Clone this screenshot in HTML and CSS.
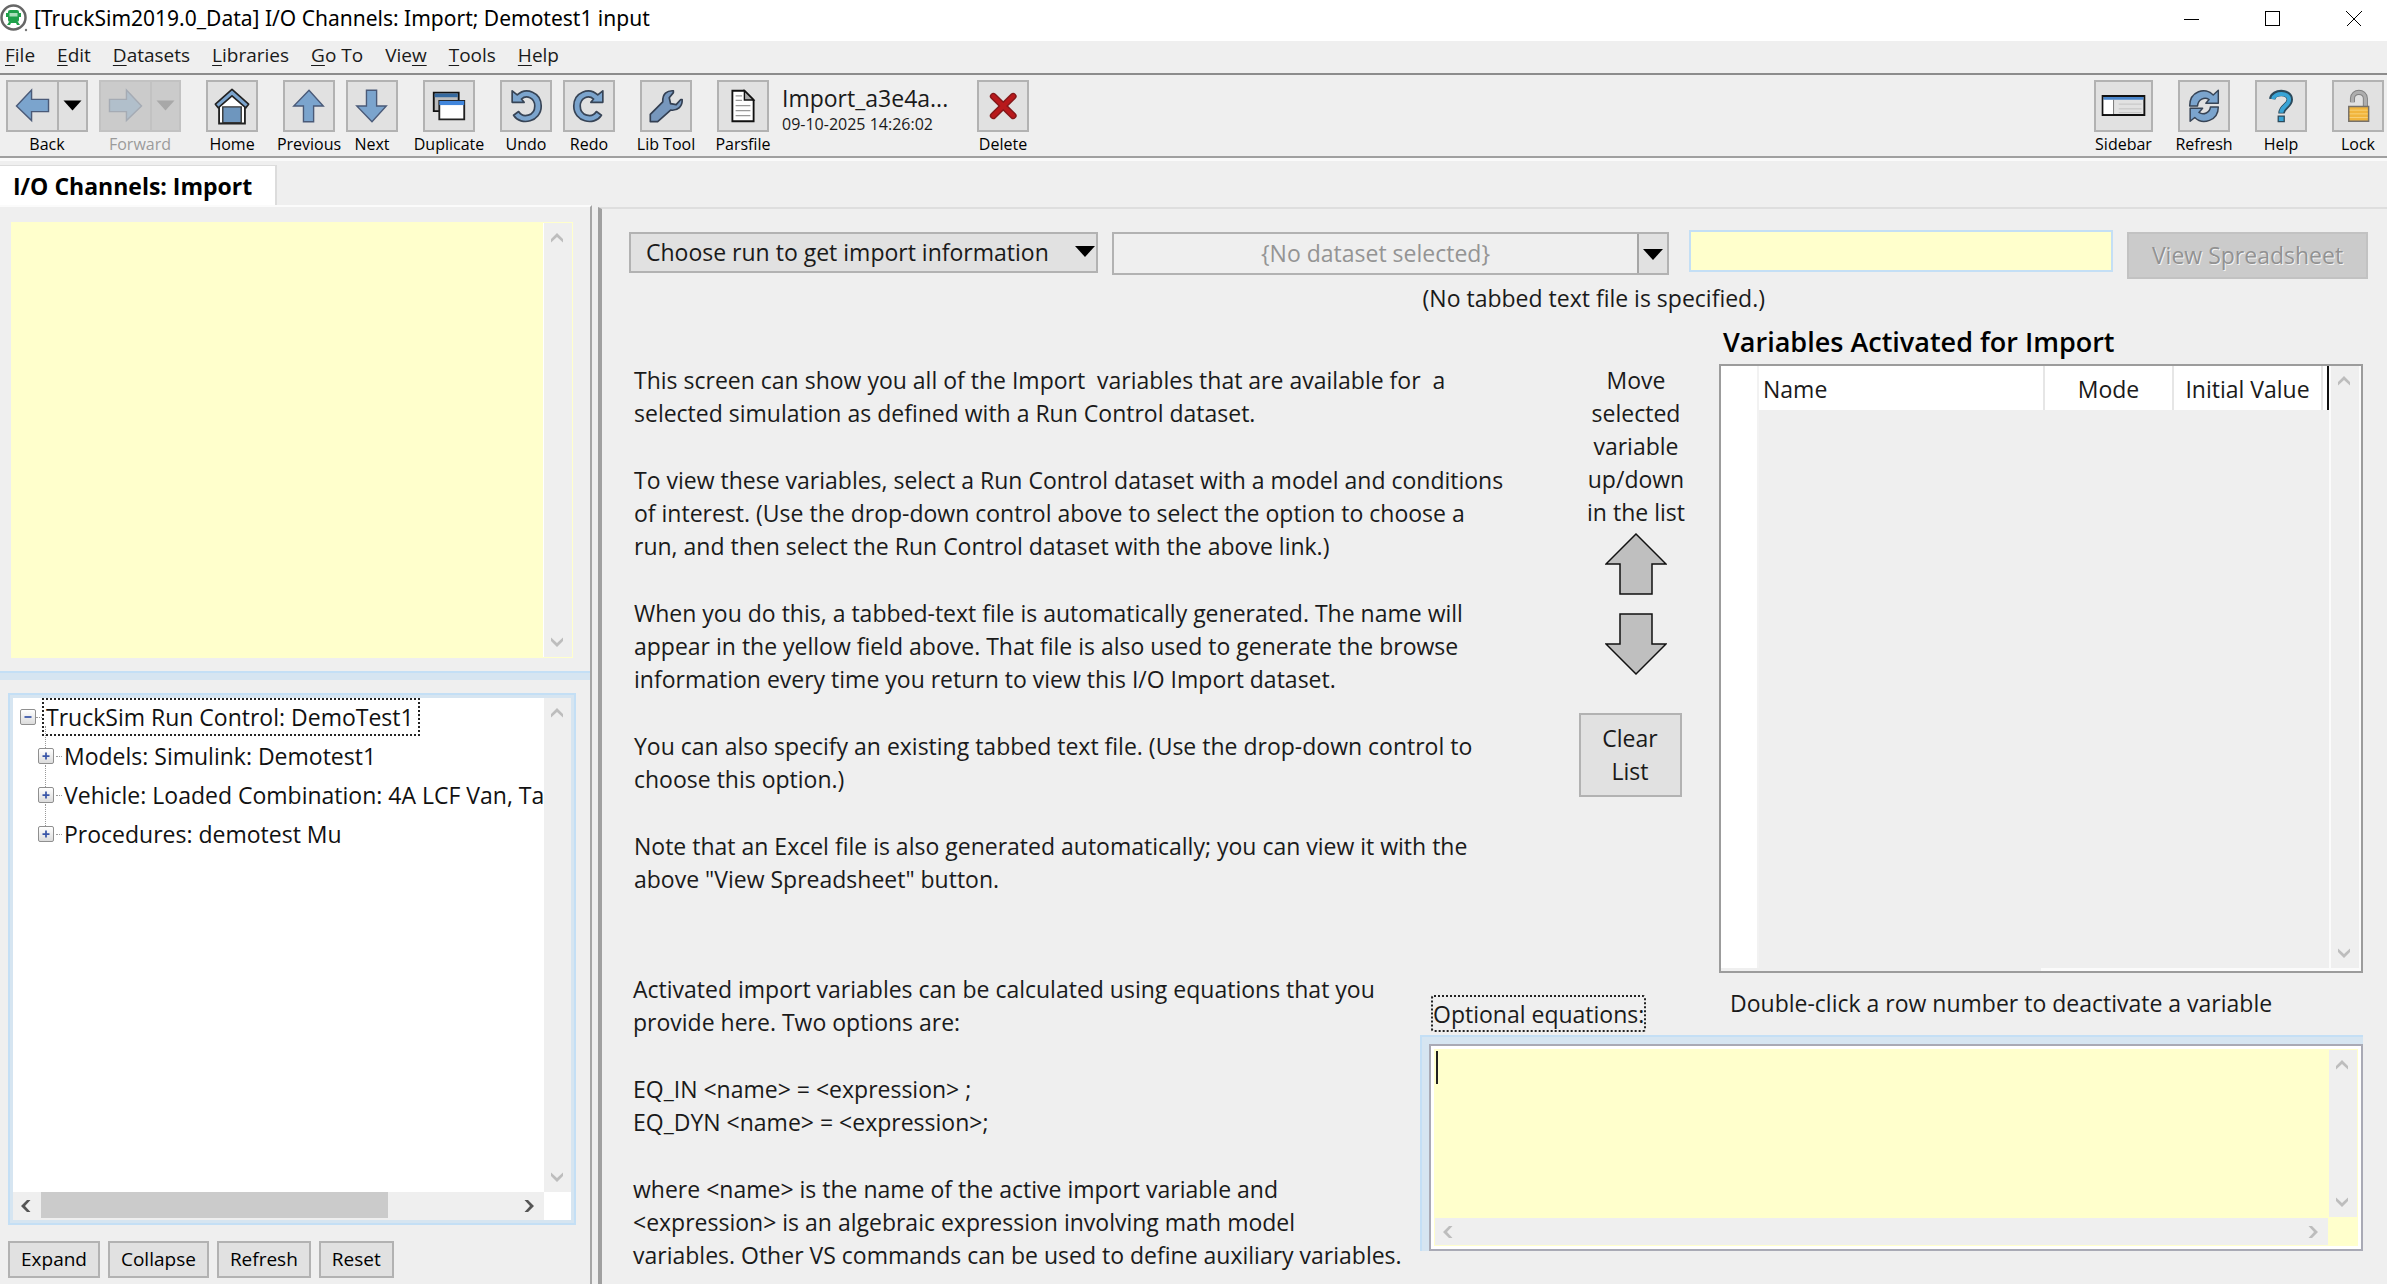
FILE: index.html
```
<!DOCTYPE html>
<html lang="en">
<head>
<meta charset="utf-8">
<title>[TruckSim2019.0_Data] I/O Channels: Import; Demotest1 input</title>
<link rel="stylesheet" href="styles.css">
</head>
<body>
<svg class="defs" aria-hidden="true">
  <symbol id="chev-up" viewBox="0 0 14 12"><path d="M1 8 7 2l6 6v3.500L7 6l-6 5.500z"/></symbol>
  <symbol id="chev-down" viewBox="0 0 14 12"><path d="M1 4l6 6 6-6V.5L7 6 1 .5z"/></symbol>
  <symbol id="chev-left" viewBox="0 0 12 14"><path d="M8 1 2 7l6 6h3.500L6 7l5.500-6z"/></symbol>
  <symbol id="chev-right" viewBox="0 0 12 14"><path d="M4 1l6 6-6 6H.5L6 7 .5 1z"/></symbol>
</svg>

<header class="titlebar">
  <svg class="app-icon" viewBox="0 0 28 28" aria-hidden="true">
    <circle cx="13.500" cy="13.500" r="12" fill="#fff" stroke="#666" stroke-width="2.500"/>
    <rect x="8" y="6" width="11" height="12" rx="2" fill="#1fa04a"/>
    <path d="M9.500 9h8v3.500h-8z" fill="#a9dfba"/>
    <path d="M6 9h2v4H6zM19 9h2v4h-2zM9 18l-2 3h3l1-2h5l1 2h3l-2-3z" fill="#1fa04a"/>
    <circle cx="26" cy="26" r="1.200" fill="#777"/>
  </svg>
  <h1 class="title">[TruckSim2019.0_Data] I/O Channels: Import; Demotest1 input</h1>
  <div class="window-buttons">
    <button type="button" aria-label="Minimize"><svg viewBox="0 0 16 16"><path d="M0 8.500h15"/></svg></button>
    <button type="button" aria-label="Maximize"><svg viewBox="0 0 16 16"><path d="M.5.5h14v14H.5z"/></svg></button>
    <button type="button" aria-label="Close"><svg viewBox="0 0 16 16"><path d="M.5.5l15 15M15.500.5l-15 15"/></svg></button>
  </div>
</header>

<nav class="menubar">
  <button type="button"><u>F</u>ile</button>
  <button type="button"><u>E</u>dit</button>
  <button type="button"><u>D</u>atasets</button>
  <button type="button"><u>L</u>ibraries</button>
  <button type="button"><u>G</u>o To</button>
  <button type="button">Vie<u>w</u></button>
  <button type="button"><u>T</u>ools</button>
  <button type="button"><u>H</u>elp</button>
</nav>

<div class="toolbar">
  <div class="group">
    <div class="tool">
      <div class="split">
        <button type="button" aria-labelledby="t-back"><svg viewBox="0 0 52 52"><path d="M9 26 25 9v10h18v13H25v9.500z" fill="#7ba4cd" stroke="#4a5a78" stroke-width="1.500"/></svg></button>
        <button type="button" class="drop" aria-label="Back history"><svg viewBox="0 0 30 52"><path d="M5 20h20L15 31z"/></svg></button>
      </div>
      <span id="t-back">Back</span>
    </div>
    <div class="tool is-disabled">
      <div class="split">
        <button type="button" disabled aria-labelledby="t-fwd"><svg viewBox="0 0 52 52"><path d="M43 26 27 9v10H9v13h18v9.500z" fill="#b1bfcb" stroke="#a5abb4" stroke-width="1.500"/></svg></button>
        <button type="button" disabled class="drop" aria-label="Forward history"><svg viewBox="0 0 30 52"><path d="M5 20h20L15 31z" fill="#a8a8a8"/></svg></button>
      </div>
      <span id="t-fwd">Forward</span>
    </div>
  </div>
  <div class="group">
    <div class="tool">
      <button type="button" aria-labelledby="t-home"><svg viewBox="0 0 52 52"><path d="M12 24v21h28V24L26 12z" fill="#fff" stroke="#222" stroke-width="2"/><path d="M16 27h20v17H16z" fill="#6e96be" stroke="#333" stroke-width="1.500"/><path d="M26 8 8 24l3 4 15-13 15 13 3-4z" fill="#7ba4cd" stroke="#222" stroke-width="1.800" stroke-linejoin="round"/></svg></button>
      <span id="t-home">Home</span>
    </div>
  </div>
  <div class="group">
    <div class="tool">
      <button type="button" aria-labelledby="t-prev"><svg viewBox="0 0 52 52"><path d="M26 9 41.500 26H31v17H20V26H9.500z" fill="#7ba4cd" stroke="#4a5a78" stroke-width="1.500"/></svg></button>
      <span id="t-prev">Previous</span>
    </div>
    <div class="tool">
      <button type="button" aria-labelledby="t-next"><svg viewBox="0 0 52 52"><path d="M26 43 9.500 26H20V9h11v17h10.500z" fill="#7ba4cd" stroke="#4a5a78" stroke-width="1.500"/></svg></button>
      <span id="t-next">Next</span>
    </div>
  </div>
  <div class="group">
    <div class="tool">
      <button type="button" aria-labelledby="t-dup"><svg viewBox="0 0 52 52"><path d="M9.500 11.500h27v20h-27z" fill="#bcbcbc" stroke="#111" stroke-width="2"/><path d="M10.500 12.500h25v4h-25z" fill="#35699f"/><path d="M15.500 20.500h27v20h-27z" fill="#fff" stroke="#222" stroke-width="2"/><path d="M15.500 20.500h27v4.500h-27z" fill="#4186dc"/></svg></button>
      <span id="t-dup">Duplicate</span>
    </div>
  </div>
  <div class="group">
    <div class="tool">
      <button type="button" aria-labelledby="t-undo"><svg viewBox="0 0 52 52"><path d="M11 9.500 16.500 14C26 5 42.500 11 42.500 26c0 17-22 22.500-30 10l5.500-4c4.500 7.500 17.500 5 17.500-6 0-9-9-12.500-14.500-7.500l3 3.500H11z" fill="#7ba4cd" stroke="#374456" stroke-width="1.800" stroke-linejoin="round"/></svg></button>
      <span id="t-undo">Undo</span>
    </div>
    <div class="tool">
      <button type="button" aria-labelledby="t-redo"><svg viewBox="0 0 52 52"><path d="M41 9.500 35.500 14C26 5 9.500 11 9.500 26c0 17 22 22.500 30 10L34 32c-4.500 7.500-17.500 5-17.500-6 0-9 9-12.500 14.500-7.500L28 22h13z" fill="#7ba4cd" stroke="#374456" stroke-width="1.800" stroke-linejoin="round"/></svg></button>
      <span id="t-redo">Redo</span>
    </div>
  </div>
  <div class="group">
    <div class="tool">
      <button type="button" aria-labelledby="t-lib"><svg viewBox="0 0 52 52"><path d="M9 43v-8l13.500-13.500C22 13 27 9 34 9.500v2l-4.500 5.500 1.500 6.500 6 1 5-5.500h1.500c.5 7-4.500 12.500-12.500 11.500L17 43z" fill="#7797bd" stroke="#333f52" stroke-width="1.800" stroke-linejoin="round"/></svg></button>
      <span id="t-lib">Lib Tool</span>
    </div>
  </div>
  <div class="group">
    <div class="tool">
      <button type="button" aria-labelledby="t-pars"><svg viewBox="0 0 52 52"><path d="M14.500 9.500h13l10 10v23h-23z" fill="#fff" stroke="#111" stroke-width="2"/><path d="M27.500 9.500v10h10z" fill="#aaa" stroke="#111" stroke-width="1.500"/><path d="M18 15h7M18 20h7M18 25.500h16M18 31h16M18 36.500h16" stroke="#999" stroke-width="1.300"/></svg></button>
      <span id="t-pars">Parsfile</span>
    </div>
    <div class="file-info"><strong>Import_a3e4a...</strong><time>09-10-2025 14:26:02</time></div>
    <div class="tool">
      <button type="button" aria-labelledby="t-del"><svg viewBox="0 0 52 52"><path d="M15.500 15.500l21.500 21M37 15.500l-21.500 21" stroke="#84181a" stroke-width="7.500" stroke-linecap="round"/><path d="M15.500 15.500l21.500 21M37 15.500l-21.500 21" stroke="#b8191c" stroke-width="4.500" stroke-linecap="round"/></svg></button>
      <span id="t-del">Delete</span>
    </div>
  </div>
  <div class="group group-end">
    <div class="tool tool-wide">
      <button type="button" aria-labelledby="t-side"><svg viewBox="0 0 58 52"><path d="M7 15.500h44v20H7z" fill="#e2e2e2" stroke="#111" stroke-width="2"/><path d="M8 19h10v15.500H8z" fill="#fff"/><path d="M8 16.500h42v3H8z" fill="#4a86cc"/><path d="M18.500 19.500v15" stroke="#777"/><path d="M24 24h24M24 29h24M24 33h24" stroke="#c2c2c2"/></svg></button>
      <span id="t-side">Sidebar</span>
    </div>
    <div class="tool">
      <button type="button" aria-labelledby="t-ref"><svg viewBox="0 0 52 52"><g fill="#7ba4cd" stroke="#374456" stroke-width="1.600" stroke-linejoin="round"><path d="M10.500 26c0-16 17-21 25.500-12l5.500-5v14H28l3.500-4c-5-3.500-12 0-12.500 7z"/><path d="M41.500 27c0 15-17 20-25.500 11.500l-5 4V28.500h13.500l-4 4.500c5 3.500 12 0 12.500-6z"/></g></svg></button>
      <span id="t-ref">Refresh</span>
    </div>
    <div class="tool">
      <button type="button" aria-labelledby="t-help"><svg viewBox="0 0 52 52"><path d="M16.500 18.500c1-9 19-9 19 .5 0 7-9 7.500-9 15" stroke="#2b4a5c" stroke-width="7" fill="none"/><path d="M17.300 18.500c1.500-7.500 17.500-7.500 17.500.5 0 6.500-8.500 7.500-8.500 14.200" stroke="#38a4d6" stroke-width="4.200" fill="none"/><path d="M23 37h6.500v6H23z" fill="#38a4d6" stroke="#2b4a5c" stroke-width="1.400"/></svg></button>
      <span id="t-help">Help</span>
    </div>
    <div class="tool">
      <button type="button" aria-labelledby="t-lock"><svg viewBox="0 0 52 52"><path d="M20 22v-4c0-9 14-9 14 0v9" stroke="#808080" stroke-width="5.500" fill="none"/><path d="M20 22v-4c0-9 14-9 14 0v9" stroke="#adadad" stroke-width="3.500" fill="none"/><path d="M16 26.500h21.500v16H16z" fill="#f1b53c" stroke="#76716a" stroke-width="1.600"/><path d="M17 30.500h19.500M17 34.500h19.500M17 38.500h19.500" stroke="#f8d37c"/></svg></button>
      <span id="t-lock">Lock</span>
    </div>
  </div>
</div>

<div class="tabs"><h2 class="tab">I/O Channels: Import</h2></div>

<div class="workspace">
  <aside class="sidebar">
    <div class="notes">
      <textarea aria-label="Notes"></textarea>
      <div class="scroll-v" aria-hidden="true"><svg><use href="#chev-up"/></svg><svg><use href="#chev-down"/></svg></div>
    </div>
    <div class="splitter"></div>
    <div class="tree-box">
      <ul class="tree">
        <li class="root"><button type="button" class="toggle" aria-label="Collapse run control">
          <svg viewBox="0 0 16 16"><path d="M4 8h8"/></svg></button><span class="dots"></span><span class="focus">TruckSim Run Control: DemoTest1</span></li>
        <li><button type="button" class="toggle" aria-label="Expand models"><svg viewBox="0 0 16 16"><path d="M4 8h8M8 4v8"/></svg></button><span class="dots"></span>Models: Simulink: Demotest1</li>
        <li><button type="button" class="toggle" aria-label="Expand vehicle"><svg viewBox="0 0 16 16"><path d="M4 8h8M8 4v8"/></svg></button><span class="dots"></span>Vehicle: Loaded Combination: 4A LCF Van, Ta</li>
        <li><button type="button" class="toggle" aria-label="Expand procedures"><svg viewBox="0 0 16 16"><path d="M4 8h8M8 4v8"/></svg></button><span class="dots"></span>Procedures: demotest Mu</li>
      </ul>
      <div class="scroll-v" aria-hidden="true"><svg><use href="#chev-up"/></svg><svg><use href="#chev-down"/></svg></div>
      <div class="scroll-h dark" aria-hidden="true"><svg><use href="#chev-left"/></svg><span class="thumb"></span><svg><use href="#chev-right"/></svg></div>
    </div>
    <div class="tree-actions">
      <button type="button">Expand</button>
      <button type="button">Collapse</button>
      <button type="button">Refresh</button>
      <button type="button">Reset</button>
    </div>
  </aside>

  <main class="content">
    <div class="controls">
      <div class="choose">
        <select aria-label="Import source"><option>Choose run to get import information</option></select>
        <svg viewBox="0 0 20 12" aria-hidden="true"><path d="M0 1h20L10 12z"/></svg>
      </div>
      <div class="dataset">
        <button type="button" class="dataset-link" disabled>{No dataset selected}</button>
        <button type="button" class="dataset-drop" aria-label="Select dataset"><svg viewBox="0 0 20 12"><path d="M0 1h20L10 12z"/></svg></button>
      </div>
      <input class="file-field" type="text" aria-label="Tabbed text file">
      <button type="button" class="view-sheet" disabled>View Spreadsheet</button>
    </div>
    <p class="file-status">(No tabbed text file is specified.)</p>

    <div class="upper">
      <div class="help-text">
        <p>This screen can show you all of the Import&nbsp; variables that are available for&nbsp; a<br>selected simulation as defined with a Run Control dataset.</p>
        <p>To view these variables, select a Run Control dataset with a model and conditions<br>of interest. (Use the drop-down control above to select the option to choose a<br>run, and then select the Run Control dataset with the above link.)</p>
        <p>When you do this, a tabbed-text file is automatically generated. The name will<br>appear in the yellow field above. That file is also used to generate the browse<br>information every time you return to view this I/O Import dataset.</p>
        <p>You can also specify an existing tabbed text file. (Use the drop-down control to<br>choose this option.)</p>
        <p>Note that an Excel file is also generated automatically; you can view it with the<br>above "View Spreadsheet" button.</p>
      </div>
      <div class="mover">
        <p>Move<br>selected<br>variable<br>up/down<br>in the list</p>
        <button type="button" class="arrow" aria-label="Move up"><svg viewBox="0 0 62 62"><path d="M31 1 61 31H47v30H15V31H1z"/></svg></button>
        <button type="button" class="arrow" aria-label="Move down"><svg viewBox="0 0 62 62"><path d="M31 61 61 31H47V1H15v30H1z"/></svg></button>
        <button type="button" class="clear">Clear<br>List</button>
      </div>
      <section class="variables">
        <h3>Variables Activated for Import</h3>
        <div class="grid-box">
          <table>
            <colgroup><col class="c-num"><col><col class="c-mode"><col class="c-init"><col class="c-end"></colgroup>
            <thead><tr><th></th><th>Name</th><th>Mode</th><th>Initial Value</th><th></th></tr></thead>
            <tbody><tr><td></td><td colspan="4"></td></tr></tbody>
          </table>
          <div class="scroll-v" aria-hidden="true"><svg><use href="#chev-up"/></svg><svg><use href="#chev-down"/></svg></div>
        </div>
      </section>
    </div>

    <div class="lower">
      <div class="help-text">
        <p>Activated import variables can be calculated using equations that you<br>provide here. Two options are:</p>
        <p>EQ_IN &lt;name&gt; = &lt;expression&gt; ;<br>EQ_DYN &lt;name&gt; = &lt;expression&gt;;</p>
        <p>where &lt;name&gt; is the name of the active import variable and<br>&lt;expression&gt; is an algebraic expression involving math model<br>variables. Other VS commands can be used to define auxiliary variables.</p>
      </div>
      <div class="equations">
        <div class="equations-head">
          <label for="eq">Optional equations:</label>
          <p>Double-click a row number to deactivate a variable</p>
        </div>
        <div class="eq-frame">
          <div class="eq-box">
            <textarea id="eq"></textarea>
            <span class="caret"></span>
            <div class="scroll-v" aria-hidden="true"><svg><use href="#chev-up"/></svg><svg><use href="#chev-down"/></svg></div>
            <div class="scroll-h" aria-hidden="true"><svg><use href="#chev-left"/></svg><svg><use href="#chev-right"/></svg></div>
          </div>
        </div>
      </div>
    </div>
  </main>
</div>
</body>
</html>
```
FILE: styles.css
```
* { box-sizing: border-box; }

body {
  margin: 0;
  min-height: 100vh;
  display: flex;
  flex-direction: column;
  background: #efefef;
  color: #1a1a1a;
  font: 23px/33px "Open Sans", "Noto Sans", sans-serif;
}

h1, h2, h3, p, ul { margin: 0; padding: 0; }
button, select, input, textarea { font: inherit; color: inherit; margin: 0; padding: 0; border-radius: 0; }
button { border: 0; background: none; }
textarea { display: block; resize: none; border: 0; outline: 0; background: #ffffcc; min-width: 0; min-height: 0; }
svg { display: block; }
.defs { position: absolute; width: 0; height: 0; }

/* Title bar */
.titlebar { display: flex; align-items: flex-start; height: 41px; background: #fff; color: #000; }
.app-icon { width: 28px; height: 28px; margin-top: 4px; }
.title { flex: 1; margin-left: 6px; font: 400 21px/36px "Noto Sans", sans-serif; }
.window-buttons { display: flex; gap: 14px; }
.window-buttons button { width: 67px; height: 37px; display: grid; place-items: center; }
.window-buttons svg { width: 16px; height: 16px; fill: none; stroke: #000; shape-rendering: crispEdges; }

/* Menu bar */
.menubar { display: flex; gap: 22px; height: 32px; padding-left: 5px; }
.menubar button { font-size: 19px; line-height: 28px; height: 28px; white-space: nowrap; }
.menubar u { text-underline-offset: 3px; }

/* Toolbar */
.toolbar {
  display: flex;
  gap: 25px;
  height: 85px;
  padding: 5px 3px 0 6px;
  border-top: 2px solid #8c8c8c;
  border-bottom: 2px solid #a0a0a0;
}
.group { display: flex; gap: 11px; }
.group-end { gap: 25px; margin-left: auto; }
.tool { width: 52px; display: flex; flex-direction: column; align-items: center; color: #000; font-size: 16px; line-height: 24px; white-space: nowrap; }
.tool:has(.split) { width: 82px; }
.tool-wide { width: 59px; }
.tool button { width: 100%; height: 52px; border: 2px solid #b2b2b2; background: #e1e1e1; }
.tool svg { width: 100%; height: 52px; margin-top: -2px; fill: #000; overflow: visible; }
.split { display: flex; width: 100%; }
.split button { width: 53px; }
.split .drop { width: 31px; margin-left: -2px; }
.is-disabled { color: #9b9b9b; }
.is-disabled button { background: #cbcbcb; border-color: #c2c2c2; }
.file-info { width: 184px; padding-top: 2px; margin-left: 2px; display: flex; flex-direction: column; }
.file-info strong { font-weight: 400; line-height: 32px; }
.file-info time { font-size: 16px; line-height: 20px; }

/* Tab strip */
.tabs { height: 47px; padding-top: 4px; border-top: 3px solid #fafafa; display: flex; }
.tab { padding: 0 23px 0 13px; background: #fff; color: #000; border: solid #dcdcdc; border-width: 1px 2px 0 0; font: 700 23px/41px "Open Sans", sans-serif; }

/* Two panes */
.workspace { flex: 1; display: flex; }
.sidebar {
  flex: 0 0 592px;
  display: flex;
  flex-direction: column;
  padding-top: 15px;
  border-top: 2px solid #fbfbfb;
  border-right: 2px solid #a6a6a6;
}
.notes {
  flex: 439 1 0;
  margin: 0 17px 0 11px;
  display: grid;
  grid-template-columns: 1fr 28px;
  padding: 1px 1px 1px 0;
  background: #ffffcc;
}
.notes textarea { width: 100%; height: 100%; border-right: 1px solid #fff; }
.splitter { height: 9px; margin: 13px 0; background: #d6e5f1; border-top: 2px solid #c4dff5; }
.tree-box {
  flex: 529 1 0;
  margin: 0 14px 0 8px;
  min-height: 0;
  display: grid;
  grid-template: minmax(0, 1fr) 28px / minmax(0, 1fr) 27px;
  border: 2px solid #c4dff5;
  outline: 3px solid #d6e5f1;
  outline-offset: -5px;
  padding: 3px;
  background: #fff;
}
.tree { overflow: hidden; list-style: none; white-space: nowrap; line-height: 38px; color: #111; }
.tree li { display: flex; align-items: center; height: 39px; padding-left: 25px; }
.tree .root { padding-left: 7px; }
.toggle { flex: none; width: 16px; height: 16px; border: 1px solid #8f8f8f; border-radius: 2px; background: linear-gradient(#fff, #dcdcdc); }
.toggle svg { width: 14px; height: 14px; stroke: #3a56a8; stroke-width: 2; }
.dots { flex: none; width: 6px; margin: 0 2px; border-top: 1px dotted #999; }
.root .dots { margin: 0; }
.tree li + li .toggle { position: relative; }
.tree li + li .toggle::before { content: ""; position: absolute; left: 6px; bottom: 15px; height: 22px; border-left: 1px dotted #999; }
.focus { border: 2px dotted #222; height: 38px; line-height: 34px; padding: 0 4px 0 2px; }
.tree-actions { display: flex; gap: 8px; padding: 16px 8px 6px; }
.tree-actions button { height: 37px; padding: 0 11px; border: 2px solid #b2b2b2; background: #e1e1e1; font-size: 19px; line-height: 33px; color: #000; }

/* Scroll tracks */
.scroll-v, .scroll-h { display: flex; justify-content: space-between; align-items: center; background: #efefef; fill: #bdbdbd; }
.scroll-v { flex-direction: column; padding: 8px 2px 8px 0; }
.scroll-h { padding: 0 8px 0 6px; }
.scroll-v svg { width: 14px; height: 12px; }
.scroll-h svg { width: 12px; height: 14px; }
.dark { fill: #555; }
.thumb { flex: 1; align-self: stretch; margin: 0 136px 2px 10px; background: #cbcbcb; }

/* Content pane */
.content {
  flex: 1;
  min-width: 0;
  margin: 2px 0 0 6px;
  display: flex;
  flex-direction: column;
  padding: 23px 24px 0 27px;
  border-left: 4px solid #a0a0a0;
  border-top: 2px solid #dedede;
}
.controls { display: flex; align-items: flex-start; height: 51px; margin-right: -5px; }
.choose { flex: 0 0 469px; position: relative; }
.choose select { appearance: none; width: 100%; height: 41px; border: 2px solid #b2b2b2; background: #e1e1e1; padding-left: 15px; }
.choose svg { position: absolute; right: 3px; top: 13px; width: 20px; height: 12px; }
.dataset { flex: 1; margin-left: 14px; display: flex; height: 43px; border: 2px solid #b2b2b2; }
.dataset-link { flex: 1; color: #949494; border-right: 2px solid #a6a6a6; }
.dataset-drop { width: 28px; background: #e1e1e1; }
.dataset-drop svg { width: 20px; height: 12px; margin-left: 4px; }
.file-field { flex: 0 0 424px; height: 42px; margin: -2px 14px 0 20px; border: 2px solid #c4dff5; background: #ffffcc; }
.view-sheet { flex: 0 0 241px; height: 47px; border: 2px solid #c2c2c2; background: #cbcbcb; color: #929292; text-shadow: 1px 1px #f4f4f4; }
.file-status { align-self: flex-end; margin-right: 598px; line-height: 30px; }

.upper { flex: 1; display: flex; margin-top: 12px; }
.help-text { flex: 1; padding-left: 5px; white-space: nowrap; }
.help-text p + p { margin-top: 34px; }
.upper .help-text, .mover { padding-top: 39px; }
.mover { width: 120px; margin-right: 23px; display: flex; flex-direction: column; align-items: center; text-align: center; }
.arrow { width: 62px; height: 62px; margin-top: 4px; }
.arrow + .arrow { margin-top: 18px; }
.arrow svg { width: 62px; height: 62px; fill: #bfbfbf; stroke: #111; stroke-width: 1.500; }
.clear { width: 103px; height: 84px; margin: 38px 12px 0 0; border: 2px solid #b2b2b2; background: #e1e1e1; }
.variables { flex: 0 0 644px; display: flex; flex-direction: column; }
.variables h3 { padding-left: 4px; margin-bottom: 6px; font: 600 27px/33px "Open Sans", sans-serif; color: #000; }
.grid-box {
  flex: 1;
  display: grid;
  grid-template-columns: 1fr 28px;
  gap: 2px;
  border: 2px solid #9c9c9c;
  padding: 0 2px 3px 0;
  background: linear-gradient(90deg, #efefef 50%, #fbfbfb 50%);
}
table { width: 100%; height: 100%; border-collapse: collapse; table-layout: fixed; background: #efefef; }
.c-num { width: 37px; }
.c-mode { width: 129px; }
.c-init { width: 149px; }
.c-end { width: 6px; }
th { height: 44px; padding: 2px 0 0; font-weight: 400; background: #fff; border-right: 2px solid #e6e6e6; white-space: nowrap; }
th:nth-child(2) { text-align: left; padding-left: 4px; }
th:first-child { border-right-color: #f2f2f2; }
th:last-child { border-right: 2px solid #111; }
td { padding: 0; }
td:first-child { background: #fff; border-right: 2px solid #f2f2f2; }

.lower { display: flex; height: 311px; flex: none; }
.lower .help-text { padding-left: 4px; }
.equations { flex: 0 0 943px; }
.equations-head { display: flex; align-items: flex-start; height: 62px; padding-left: 11px; }
.equations-head label { width: 215px; height: 37px; margin-top: 22px; border: 2px dotted #222; border-radius: 3px; white-space: nowrap; line-height: 35px; }
.equations-head p { margin: 14px 0 0 84px; white-space: nowrap; }
.eq-frame { height: 216px; padding: 7px 0 0 7px; background: #d6e5f1; border: solid #c4dff5; border-width: 2px 0 0 2px; }
.eq-box {
  position: relative;
  height: 100%;
  display: grid;
  grid-template: minmax(0, 1fr) 27px / 1fr 28px;
  gap: 1px;
  border: 2px solid #a9aab5;
  padding: 4px;
  background: #ffffcc;
  outline: 3px solid #fff;
  outline-offset: -5px;
}
.eq-box textarea { width: 100%; height: 100%; }
.caret { position: absolute; left: 5px; top: 5px; width: 2px; height: 33px; background: #222; }
```
